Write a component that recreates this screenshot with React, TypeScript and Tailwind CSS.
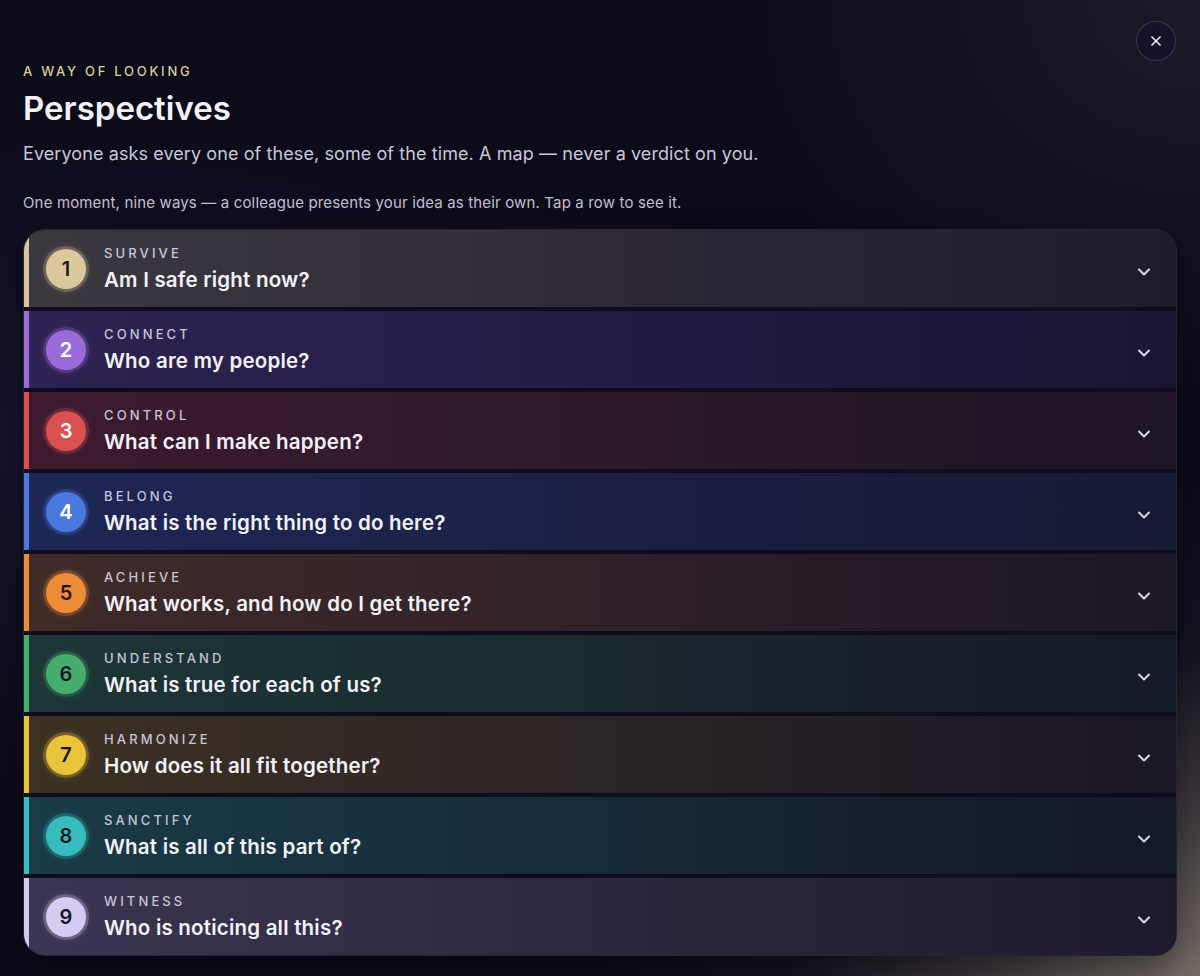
import { ChevronDown, X } from "lucide-react";

interface Perspective {
  n: number;
  label: string;
  question: string;
  bar: string;
  dot: string;
  ring: string;
  num: string;
  bg: string;
}

const PERSPECTIVES: Perspective[] = [
  {
    n: 1,
    label: "SURVIVE",
    question: "Am I safe right now?",
    bar: "bg-[#d8c49a]",
    dot: "bg-[#dcc89d]",
    ring: "ring-[#dcc89d]/25 shadow-[0_0_10px_rgba(220,200,157,0.25)]",
    num: "text-[#1a1724]",
    bg: "bg-[linear-gradient(90deg,#3b3840_0%,#322d38_40%,#262230_75%,#201d2b_100%)]",
  },
  {
    n: 2,
    label: "CONNECT",
    question: "Who are my people?",
    bar: "bg-[#9a6bd8]",
    dot: "bg-[#9a6bd8]",
    ring: "ring-[#9a6bd8]/25 shadow-[0_0_10px_rgba(154,107,216,0.3)]",
    num: "text-white",
    bg: "bg-[linear-gradient(90deg,#2e2352_0%,#251d46_40%,#1e1839_75%,#1a1632_100%)]",
  },
  {
    n: 3,
    label: "CONTROL",
    question: "What can I make happen?",
    bar: "bg-[#d9504f]",
    dot: "bg-[#d9504f]",
    ring: "ring-[#d9504f]/25 shadow-[0_0_10px_rgba(217,80,79,0.3)]",
    num: "text-white",
    bg: "bg-[linear-gradient(90deg,#3d1a2e_0%,#301a2b_40%,#241726_75%,#1d1424_100%)]",
  },
  {
    n: 4,
    label: "BELONG",
    question: "What is the right thing to do here?",
    bar: "bg-[#4a78de]",
    dot: "bg-[#4a78de]",
    ring: "ring-[#4a78de]/25 shadow-[0_0_10px_rgba(74,120,222,0.3)]",
    num: "text-white",
    bg: "bg-[linear-gradient(90deg,#1e2656_0%,#1c2248_40%,#191d3b_75%,#161a33_100%)]",
  },
  {
    n: 5,
    label: "ACHIEVE",
    question: "What works, and how do I get there?",
    bar: "bg-[#ec8c37]",
    dot: "bg-[#ec8c37]",
    ring: "ring-[#ec8c37]/25 shadow-[0_0_10px_rgba(236,140,55,0.3)]",
    num: "text-[#1a1724]",
    bg: "bg-[linear-gradient(90deg,#402b27_0%,#332329_40%,#251b26_75%,#1c1723_100%)]",
  },
  {
    n: 6,
    label: "UNDERSTAND",
    question: "What is true for each of us?",
    bar: "bg-[#46ad6f]",
    dot: "bg-[#46ad6f]",
    ring: "ring-[#46ad6f]/25 shadow-[0_0_10px_rgba(70,173,111,0.3)]",
    num: "text-[#1a1724]",
    bg: "bg-[linear-gradient(90deg,#1d3636_0%,#1b2d31_40%,#172029_75%,#151a27_100%)]",
  },
  {
    n: 7,
    label: "HARMONIZE",
    question: "How does it all fit together?",
    bar: "bg-[#e9c43a]",
    dot: "bg-[#e9c43a]",
    ring: "ring-[#e9c43a]/25 shadow-[0_0_10px_rgba(233,196,58,0.3)]",
    num: "text-[#1a1724]",
    bg: "bg-[linear-gradient(90deg,#3c3122_0%,#2f2725_40%,#221d25_75%,#1b1723_100%)]",
  },
  {
    n: 8,
    label: "SANCTIFY",
    question: "What is all of this part of?",
    bar: "bg-[#38bcbd]",
    dot: "bg-[#38bcbd]",
    ring: "ring-[#38bcbd]/25 shadow-[0_0_10px_rgba(56,188,189,0.3)]",
    num: "text-[#1a1724]",
    bg: "bg-[linear-gradient(90deg,#1a3b47_0%,#182e3c_40%,#15202f_75%,#131a2a_100%)]",
  },
  {
    n: 9,
    label: "WITNESS",
    question: "Who is noticing all this?",
    bar: "bg-[#d3c7ef]",
    dot: "bg-[#d6cbf2]",
    ring: "ring-[#d6cbf2]/25 shadow-[0_0_10px_rgba(214,203,242,0.25)]",
    num: "text-[#1a1724]",
    bg: "bg-[linear-gradient(90deg,#3b3551_0%,#302a43_40%,#252034_75%,#1e1a2d_100%)]",
  },
];

function PerspectiveRow({ p }: { p: Perspective }) {
  return (
    <button
      type="button"
      className={`flex h-[77px] w-full items-center text-left ${p.bg}`}
    >
      <span className={`h-full w-[5px] shrink-0 ${p.bar}`} />
      <span
        className={`ml-[17px] flex h-[40px] w-[40px] shrink-0 items-center justify-center rounded-full ring-[3px] ${p.dot} ${p.ring}`}
      >
        <span className={`text-[20px] font-semibold leading-none ${p.num}`}>{p.n}</span>
      </span>
      <span className="ml-[18px] flex flex-1 flex-col">
        <span className="text-[13px] font-medium leading-[16px] tracking-[0.24em] text-[#c9c4d8]">
          {p.label}
        </span>
        <span className="mt-[6px] text-[20.5px] font-semibold leading-[26px] tracking-[0.01em] text-[#f3f1f8]">
          {p.question}
        </span>
      </span>
      <ChevronDown className="mr-[22px] mt-[6px] shrink-0 text-[#d9d5e6]" size={20} strokeWidth={2.5} />
    </button>
  );
}

export default function App() {
  return (
    <div className="relative min-h-screen w-full overflow-hidden bg-[#0c0b19] font-['Inter','Liberation_Sans',sans-serif]">
      <div className="pointer-events-none absolute inset-0 bg-[radial-gradient(ellipse_at_100%_100%,rgba(135,125,115,0.85)_0%,rgba(100,92,88,0.55)_12%,rgba(40,36,44,0.25)_24%,rgba(12,11,25,0)_36%)]" />
      <div className="pointer-events-none absolute inset-0 bg-[radial-gradient(ellipse_at_0%_45%,rgba(40,36,80,0.35)_0%,rgba(12,11,25,0)_45%)]" />
      <div className="pointer-events-none absolute inset-0 bg-[radial-gradient(ellipse_at_100%_0%,rgba(48,42,56,0.5)_0%,rgba(12,11,25,0)_28%)]" />

      <button
        type="button"
        className="absolute right-[24px] top-[21px] flex h-10 w-10 items-center justify-center rounded-full border border-white/15 bg-[#14132a]"
      >
        <X size={16} strokeWidth={2.4} className="text-[#f1eff7]" />
      </button>

      <div className="relative px-[23px] pt-[63px]">
        <p className="text-[13px] font-medium leading-[16px] tracking-[0.21em] text-[#dccb9c]">
          A WAY OF LOOKING
        </p>
        <h1 className="mt-[9px] text-[33px] font-semibold leading-[40px] text-[#f4f2f9]">
          Perspectives
        </h1>
        <p className="mt-[13px] text-[18px] leading-[26px] tracking-[0.005em] text-[#c9c6d9]">
          Everyone asks every one of these, some of the time. A map — never a verdict on you.
        </p>
        <p className="mt-[26px] text-[15px] leading-[20px] tracking-[0.01em] text-[#c2bfd2]">
          One moment, nine ways — a colleague presents your idea as their own. Tap a row to see it.
        </p>

        <div className="mt-[16px] flex flex-col gap-[4px] overflow-hidden rounded-[22px] border border-white/10 bg-[#0f0d1d] shadow-[0_10px_30px_rgba(0,0,0,0.4)]">
          {PERSPECTIVES.map((p) => (
            <PerspectiveRow key={p.n} p={p} />
          ))}
        </div>
      </div>
    </div>
  );
}
